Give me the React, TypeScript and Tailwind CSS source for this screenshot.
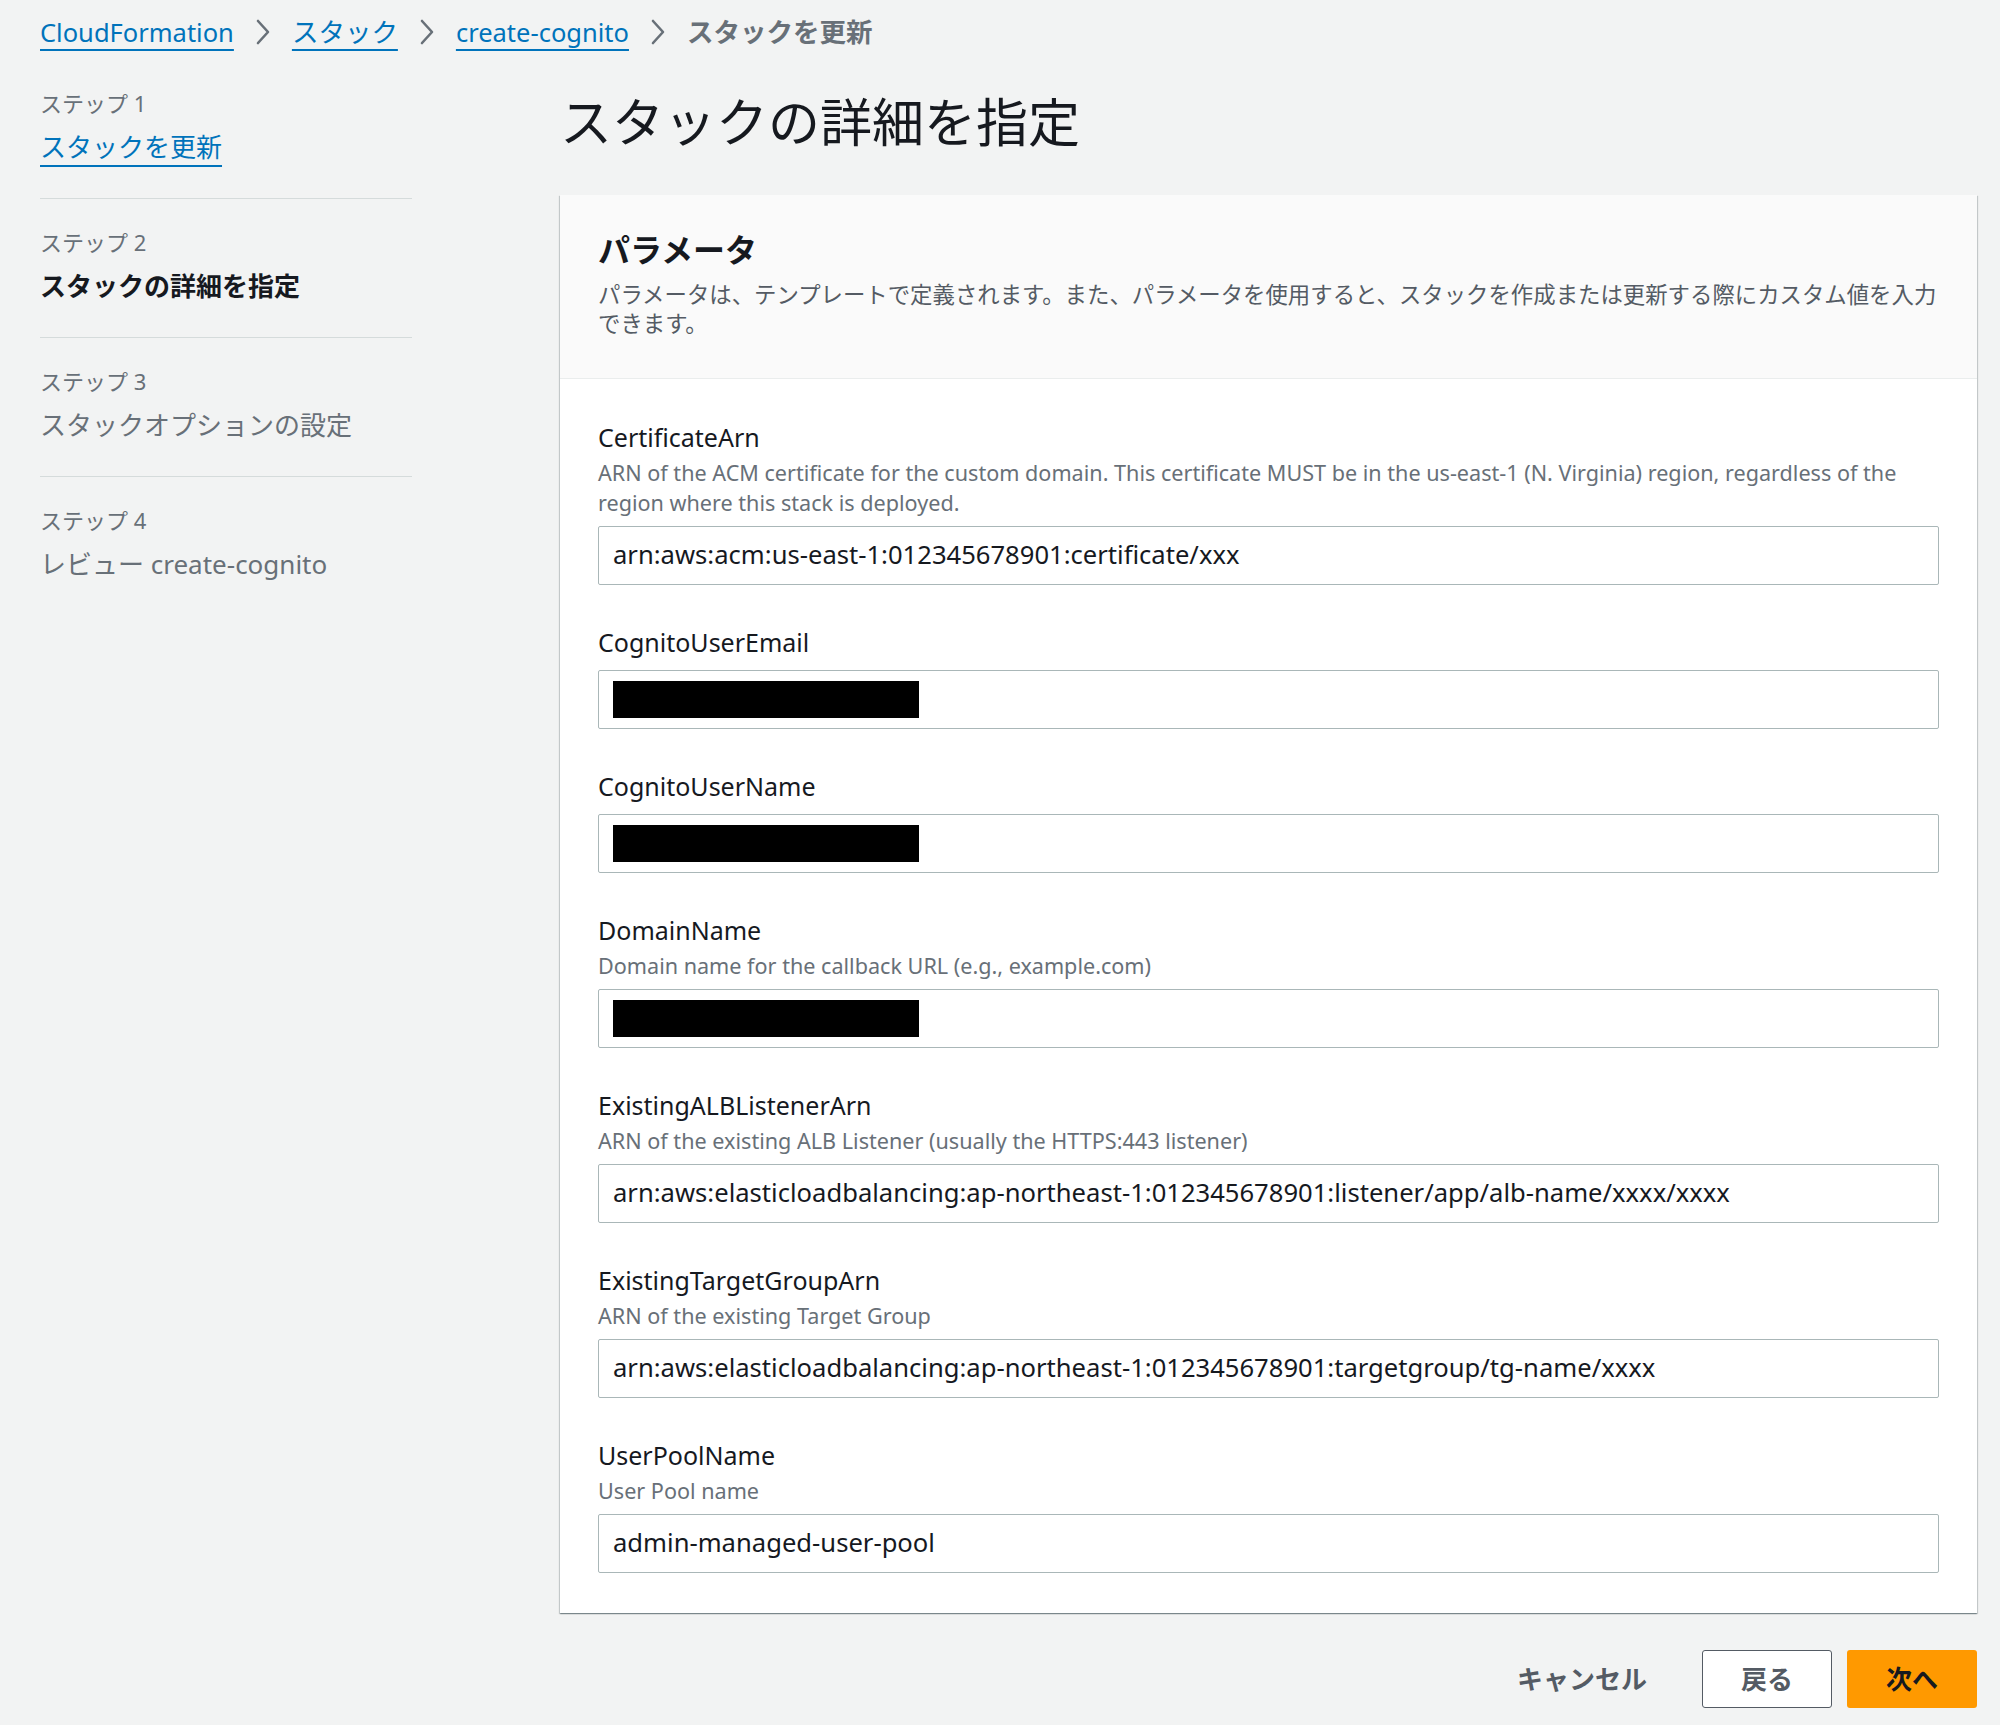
import React from "react";

const font = { fontFamily: '"Noto Sans", "Noto Sans CJK JP", sans-serif' };

const Chevron = () => (
  <svg width="16" height="26" viewBox="0 0 16 26" fill="none" className="mx-[21px] shrink-0">
    <path d="M3 2l10 11-10 11" stroke="#687078" strokeWidth="2.6" strokeLinecap="round" strokeLinejoin="round" />
  </svg>
);

type Field = {
  name: string;
  desc?: string;
  value?: string;
  redacted?: boolean;
};

const fields: Field[] = [
  {
    name: "CertificateArn",
    desc: "ARN of the ACM certificate for the custom domain. This certificate MUST be in the us-east-1 (N. Virginia) region, regardless of the region where this stack is deployed.",
    value: "arn:aws:acm:us-east-1:012345678901:certificate/xxx",
  },
  { name: "CognitoUserEmail", redacted: true },
  { name: "CognitoUserName", redacted: true },
  { name: "DomainName", desc: "Domain name for the callback URL (e.g., example.com)", redacted: true },
  {
    name: "ExistingALBListenerArn",
    desc: "ARN of the existing ALB Listener (usually the HTTPS:443 listener)",
    value: "arn:aws:elasticloadbalancing:ap-northeast-1:012345678901:listener/app/alb-name/xxxx/xxxx",
  },
  {
    name: "ExistingTargetGroupArn",
    desc: "ARN of the existing Target Group",
    value: "arn:aws:elasticloadbalancing:ap-northeast-1:012345678901:targetgroup/tg-name/xxxx",
  },
  { name: "UserPoolName", desc: "User Pool name", value: "admin-managed-user-pool" },
];

const steps = [
  { label: "ステップ 1", title: "スタックを更新", kind: "link" },
  { label: "ステップ 2", title: "スタックの詳細を指定", kind: "active" },
  { label: "ステップ 3", title: "スタックオプションの設定", kind: "disabled" },
  { label: "ステップ 4", title: "レビュー create-cognito", kind: "disabled" },
];

const App = () => {
  return (
    <div className="min-h-[1725px] w-[2000px] bg-[#f2f3f3] pl-[40px] pr-[23px] pt-[14px] text-[#16191f]" style={font}>
      {/* Breadcrumbs */}
      <nav className="flex h-[36px] items-center text-[25.5px] leading-[36px]">
        <span className="text-[#0073bb] underline decoration-2 underline-offset-[7px]">CloudFormation</span>
        <Chevron />
        <span className="text-[26.5px] text-[#0073bb] underline decoration-2 underline-offset-[7px]">スタック</span>
        <Chevron />
        <span className="text-[#0073bb] underline decoration-2 underline-offset-[7px]">create-cognito</span>
        <Chevron />
        <span className="text-[26.5px] font-bold text-[#687078]">スタックを更新</span>
      </nav>

      <div className="mt-[38px] flex">
        {/* Wizard steps */}
        <aside className="w-[372px] shrink-0">
          {steps.map((s, i) => (
            <div key={s.label} className={i > 0 ? "border-t border-[#d5dbdb] pt-[28px]" : ""}>
              <div className="text-[22px] leading-[30px] text-[#687078]">{s.label}</div>
              <div
                className={
                  "mt-[11px] pb-[33px] text-[26px] leading-[36px] " +
                  (s.kind === "link"
                    ? "text-[#0073bb]"
                    : s.kind === "active"
                    ? "font-bold text-[#16191f]"
                    : "text-[#687078]")
                }
              >
                {s.kind === "link" ? (
                  <span className="underline decoration-2 underline-offset-[8px]">{s.title}</span>
                ) : (
                  s.title
                )}
              </div>
            </div>
          ))}
        </aside>

        {/* Main content */}
        <main className="ml-[148px] flex-1">
          <h1 className="mt-[2px] text-[52px] font-normal leading-[64px] text-[#16191f]">スタックの詳細を指定</h1>

          <section className="mt-[41px] bg-white shadow-[0_1px_1px_0_rgba(0,28,36,0.3),1px_1px_1px_0_rgba(0,28,36,0.15),-1px_1px_1px_0_rgba(0,28,36,0.15)]">
            <header className="border-b border-[#eaeded] bg-[#fafafa] px-[38px] pb-[40px] pt-[35px]">
              <h2 className="text-[32px] font-bold leading-[40px]">パラメータ</h2>
              <p className="mt-[10px] text-[22.4px] leading-[29px] text-[#545b64]">
                パラメータは、テンプレートで定義されます。また、パラメータを使用すると、スタックを作成または更新する際にカスタム値を入力できます。
              </p>
            </header>

            <div className="flex flex-col gap-[41px] px-[38px] pb-[40px] pt-[42px]">
              {fields.map((f) => (
                <div key={f.name}>
                  <div className="text-[25px] leading-[32px] text-[#16191f]">{f.name}</div>
                  {f.desc && (
                    <div className="mt-[5px] text-[21.6px] leading-[30px] text-[#687078]">{f.desc}</div>
                  )}
                  <div
                    className={
                      "flex h-[59px] items-center rounded-[2px] border border-[#aab7b8] bg-white px-[14px] text-[25.6px] text-[#16191f] " +
                      (f.desc ? "mt-[8px]" : "mt-[12px]")
                    }
                  >
                    {f.redacted ? (
                      <div className="h-[37px] w-[306px] bg-black" />
                    ) : (
                      <span>{f.value}</span>
                    )}
                  </div>
                </div>
              ))}
            </div>
          </section>

          {/* Footer actions */}
          <div className="mt-[37px] flex items-center justify-end">
            <button className="mr-[35px] px-[20px] text-[26px] font-bold text-[#545b64]">キャンセル</button>
            <button className="mr-[15px] h-[58px] w-[130px] rounded-[3px] border border-[#545b64] bg-white text-[26px] font-bold text-[#545b64]">
              戻る
            </button>
            <button className="h-[58px] w-[130px] rounded-[3px] bg-[#ff9900] text-[26px] font-bold text-[#16191f]">
              次へ
            </button>
          </div>
        </main>
      </div>
    </div>
  );
};

export default App;
